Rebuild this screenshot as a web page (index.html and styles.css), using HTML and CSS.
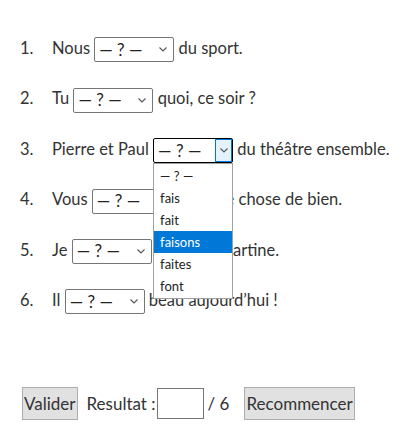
FILE: index.html
```html
<!DOCTYPE html>
<html lang="fr">
<head>
  <meta charset="UTF-8">
  <title>Exercice - faire</title>
  <meta name="viewport" content="width=device-width, initial-scale=1.0">
  <link rel="stylesheet" href="styles.css">
</head>
<body>
<div class="exo">
  <ol class="phrases">
    <li>Nous <span class="choix"><span class="val">— ? —</span><svg class="chev" viewBox="0 0 8 5"><path d="M0.5 0.5 L4 4 L7.5 0.5"/></svg></span> du sport.</li>
    <li>Tu <span class="choix"><span class="val">— ? —</span><svg class="chev" viewBox="0 0 8 5"><path d="M0.5 0.5 L4 4 L7.5 0.5"/></svg></span> quoi, ce soir ?</li>
    <li>Pierre et Paul <span class="choix ouvert"><span class="val">— ? —</span><span class="fleche"><svg class="chev" viewBox="0 0 8 5"><path d="M0.5 0.5 L4 4 L7.5 0.5"/></svg></span>
      <ul class="liste">
        <li>— ? —</li>
        <li>fais</li>
        <li>fait</li>
        <li class="actif">faisons</li>
        <li>faites</li>
        <li>font</li>
      </ul>
    </span> du théâtre ensemble.</li>
    <li>Vous <span class="choix"><span class="val">— ? —</span><svg class="chev" viewBox="0 0 8 5"><path d="M0.5 0.5 L4 4 L7.5 0.5"/></svg></span> quelque chose de bien.</li>
    <li>Je <span class="choix"><span class="val">— ? —</span><svg class="chev" viewBox="0 0 8 5"><path d="M0.5 0.5 L4 4 L7.5 0.5"/></svg></span> la bise à Martine.</li>
    <li>Il <span class="choix"><span class="val">— ? —</span><svg class="chev" viewBox="0 0 8 5"><path d="M0.5 0.5 L4 4 L7.5 0.5"/></svg></span> beau aujourd’hui !</li>
  </ol>

  <div class="bas">
    <button class="btn">Valider</button>
    <span class="res">Resultat :</span><input class="score" type="text"><span class="sur">/ 6</span>
    <button class="btn">Recommencer</button>
  </div>
</div>
</body>
</html>
```

FILE: styles.css
```css
body {
  margin: 8px;
  background: #fff;
  color: #333;
  font-family: Lato, 'Liberation Sans', sans-serif;
  font-size: 16.5px;
}
.exo { padding-top: 27px; }
.phrases {
  margin: 0;
  padding-left: 12px;
  list-style: none;
  counter-reset: num;
}
.phrases > li {
  counter-increment: num;
  height: 26px;
  line-height: 26px;
  margin-bottom: 24.4px;
  white-space: nowrap;
}
.phrases > li::before {
  content: counter(num) ".";
  display: inline-block;
  width: 32px;
}
.choix {
  position: relative;
  display: inline-flex;
  align-items: center;
  justify-content: space-between;
  width: 80px;
  height: 25px;
  box-sizing: border-box;
  border: 1px solid #767676;
  border-radius: 2px;
  padding: 0 6px 0 4px;
  vertical-align: middle;
  line-height: 20px;
  font-size: 17px;
  color: #222;
  background: #fff;
  white-space: normal;
}
.chev {
  width: 8px;
  height: 5px;
  fill: none;
  stroke: #555;
  stroke-width: 1.1;
}
.ouvert {
  border-color: #000;
  padding-right: 0;
}
.fleche {
  display: flex;
  align-items: center;
  justify-content: center;
  width: 17px;
  height: 23px;
  box-sizing: border-box;
  border: 1px solid #0078d7;
  background: #e5f1fb;
}
.liste {
  position: absolute;
  top: 24px;
  left: -1px;
  width: 80px;
  box-sizing: border-box;
  margin: 0;
  padding: 1px 0;
  list-style: none;
  background: #fff;
  border: 1px solid #a0a0a0;
  font-size: 13px;
  line-height: 22px;
  color: #222;
  z-index: 2;
}
.liste li { padding-left: 6px; height: 22px; }
.liste .actif { background: #0078d7; color: #fff; }
.bas {
  display: flex;
  align-items: center;
  margin-top: 74px;
  padding-left: 14px;
  font-size: 17px;
}
.btn {
  font-family: inherit;
  font-size: 17px;
  color: #333;
  background: #e1e1e1;
  border: 1px solid #adadad;
  height: 33px;
  padding: 0 1px;
}
.res { margin-left: 9px; margin-right: 1px; }
.score {
  width: 47px;
  height: 31px;
  box-sizing: border-box;
  border: 1px solid #767676;
  margin: 0;
  padding: 0;
}
.sur { margin: 0 15px 0 4px; }
```
